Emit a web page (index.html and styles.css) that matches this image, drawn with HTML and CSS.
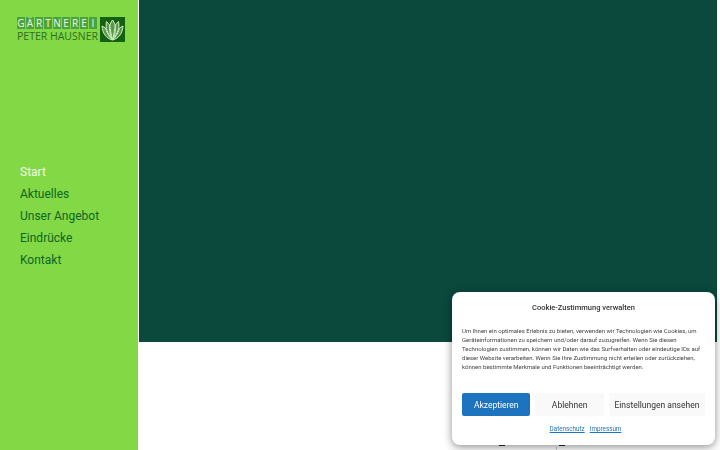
FILE: index.html
```html
<!DOCTYPE html>
<html lang="de">
<head>
    <meta charset="UTF-8">
    <meta name="viewport" content="width=device-width, initial-scale=1.0">
    <title>Gärtnerei Peter Hausner</title>
    <link rel="stylesheet" href="styles.css">
</head>
<body>
    <div class="page">
        <!-- Sidebar -->
        <aside class="sidebar">
            <a class="logo" href="#">
                <div class="logo-text">
                    <div class="logo-top">
                        <span>G</span><span>Ä</span><span>R</span><span>T</span><span>N</span><span>E</span><span>R</span><span>E</span><span>I</span>
                    </div>
                    <div class="logo-bottom">PETER HAUSNER</div>
                </div>
                <div class="logo-mark">
                    <svg width="25" height="25" viewBox="0 0 25 25" fill="#a9d99a" fill-opacity="0.45" stroke="#cfeebf" stroke-width="1">
                        <path d="M12.5 3C8.5 8 8.5 15 12.5 23C16.5 15 16.5 8 12.5 3Z"/>
                        <path d="M6.5 4.5C5 11 7.5 16 12.5 23C11 17 10.3 12 9.6 8Z"/>
                        <path d="M18.5 4.5C20 11 17.5 16 12.5 23C14 17 14.7 12 15.4 8Z"/>
                        <path d="M2 9C2.5 16 6 21.5 12.5 23C8.5 19 6.5 15 5.4 11Z"/>
                        <path d="M23 9C22.5 16 19 21.5 12.5 23C16.5 19 18.5 15 19.6 11Z"/>
                    </svg>
                </div>
            </a>
            <nav class="menu">
                <a class="active" href="#">Start</a>
                <a href="#">Aktuelles</a>
                <a href="#">Unser Angebot</a>
                <a href="#">Eindrücke</a>
                <a href="#">Kontakt</a>
            </nav>
        </aside>

        <!-- Main, mostly hidden behind the cookie banner below the hero -->
        <main class="content">
            <div class="hero"></div>
            <div class="info">
                <div class="info-head first"><span class="info-mark"></span></div>
                <div class="info-head"><span class="info-mark"></span></div>
                <div class="info-cell first"></div>
                <div class="info-cell"></div>
            </div>
        </main>
    </div>

    <!-- Cookie banner -->
    <div class="cookie">
        <div class="cookie-title">Cookie-Zustimmung verwalten</div>
        <p class="cookie-text">Um Ihnen ein optimales Erlebnis zu bieten, verwenden wir Technologien wie Cookies, um Geräteinformationen zu speichern und/oder darauf zuzugreifen. Wenn Sie diesen Technologien zustimmen, können wir Daten wie das Surfverhalten oder eindeutige IDs auf dieser Website verarbeiten. Wenn Sie Ihre Zustimmung nicht erteilen oder zurückziehen, können bestimmte Merkmale und Funktionen beeinträchtigt werden.</p>
        <div class="cookie-buttons">
            <button class="btn btn-accept">Akzeptieren</button>
            <button class="btn btn-deny">Ablehnen</button>
            <button class="btn btn-settings">Einstellungen ansehen</button>
        </div>
        <div class="cookie-links">
            <a href="#">Datenschutz</a>
            <a href="#">Impressum</a>
        </div>
    </div>
</body>
</html>
```

FILE: styles.css
```css
html, body {
    height: 100%;
}
body {
    font-family: Roboto, "Liberation Sans", sans-serif;
    background-color: #fff;
    margin: 0;
    overflow: hidden;
}
a {
    text-decoration: none;
}
.page {
    display: flex;
    height: 450px;
    overflow: hidden;
}
.sidebar {
    width: 138px;
    background-color: #82d945;
    padding: 17px 0 0 17px;
    box-sizing: border-box;
    flex-shrink: 0;
}
.logo {
    display: flex;
    gap: 1px;
    height: 25px;
}
.logo-text {
    width: 82px;
}
.logo-top {
    display: flex;
    gap: 1px;
    width: 80px;
    height: 12px;
}
.logo-top span {
    flex: 1;
    background-color: #4ba33c;
    color: #eef9e6;
    font-family: "Open Sans", sans-serif;
    font-size: 10px;
    line-height: 12px;
    text-align: center;
}
.logo-bottom {
    margin-top: 2px;
    color: #2f6f20;
    font-family: "Open Sans", sans-serif;
    font-size: 10.5px;
    line-height: 11px;
    white-space: nowrap;
}
.logo-mark {
    width: 25px;
    height: 25px;
    background-color: #14600f;
}
.menu {
    display: flex;
    flex-direction: column;
    margin: 119px 0 0 3px;
}
.menu a {
    color: #0f6424;
    font-size: 12px;
    line-height: 22px;
}
.menu a.active {
    color: #f0fbe6;
}
.content {
    flex: 1;
    margin-left: 1px;
    margin-right: 3px;
}
.hero {
    height: 342px;
    background-color: #0a493c;
}
.info {
    display: grid;
    grid-template-columns: 418px 1fr;
    margin-top: 103px;
}
.info-head {
    height: 2px;
    padding-left: 2px;
}
.info-head.first {
    padding-left: 360px;
}
.info-mark {
    display: block;
    width: 6px;
    height: 1px;
    background-color: #333;
}
.info-cell {
    height: 10px;
}
.info-cell.first {
    border-right: 1px solid #ccc;
}
.cookie {
    position: fixed;
    left: 452px;
    top: 292px;
    width: 263px;
    height: 153px;
    box-sizing: border-box;
    padding: 11px 10px 0;
    background-color: #fff;
    border-radius: 8px;
    box-shadow: 0 2px 8px rgba(0, 0, 0, 0.45);
    color: #222;
}
.cookie-title {
    font-size: 7.5px;
    font-weight: 500;
    line-height: 10px;
    text-align: center;
    color: #333;
}
.cookie-text {
    margin: 13px 0 0;
    font-size: 6px;
    line-height: 9px;
    color: #444;
}
.cookie-buttons {
    display: flex;
    gap: 5px;
    margin-top: 22px;
}
.btn {
    height: 23px;
    padding: 0;
    border: 0;
    border-radius: 2px;
    font-family: inherit;
    font-size: 8.5px;
    background-color: #f9f9f9;
    color: #333;
}
.btn-accept {
    width: 69px;
    background-color: #1e73be;
    color: #fff;
}
.btn-deny {
    width: 69px;
}
.btn-settings {
    width: 97px;
}
.cookie-links {
    display: flex;
    justify-content: center;
    gap: 5px;
    margin-top: 9px;
    padding-left: 4px;
    font-size: 6.3px;
    line-height: 8px;
}
.cookie-links a {
    color: #1e73be;
    text-decoration: underline;
}
```
